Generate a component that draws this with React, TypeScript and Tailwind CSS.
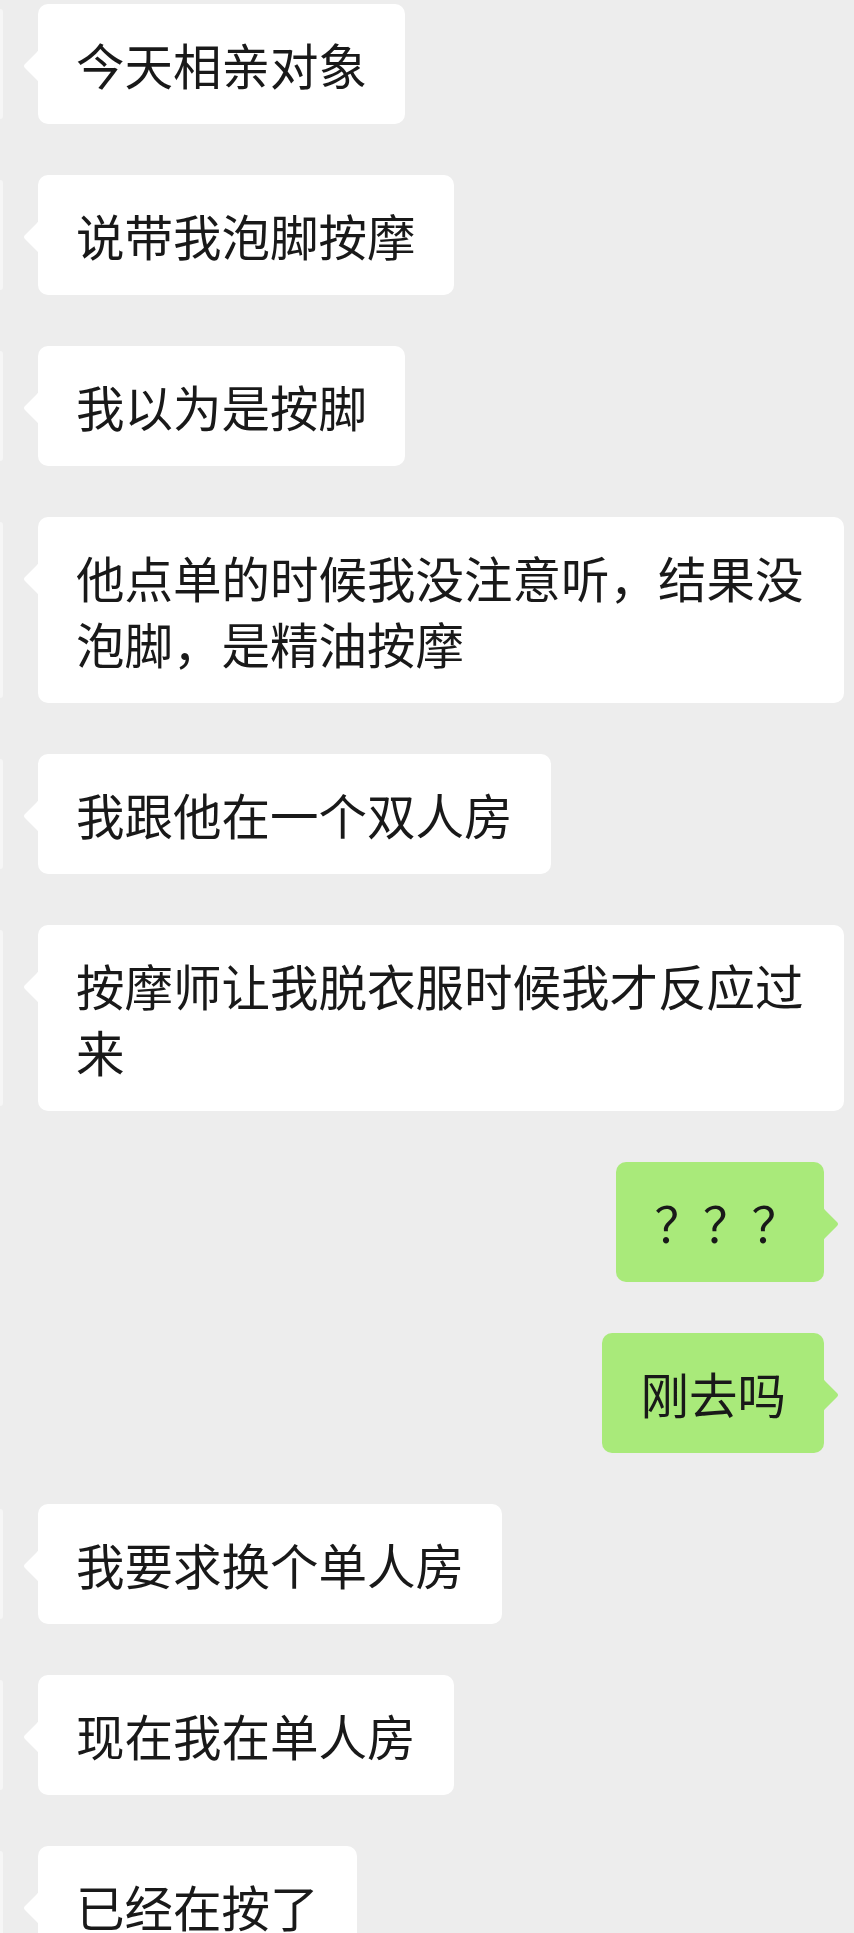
import React from 'react';

type Msg = { from: 'them' | 'me'; text: string; narrow?: boolean };

const messages: Msg[] = [
  { from: 'them', text: '今天相亲对象' },
  { from: 'them', text: '说带我泡脚按摩' },
  { from: 'them', text: '我以为是按脚' },
  { from: 'them', text: '他点单的时候我没注意听，结果没泡脚，是精油按摩' },
  { from: 'them', text: '我跟他在一个双人房' },
  { from: 'them', text: '按摩师让我脱衣服时候我才反应过来' },
  { from: 'me', text: '？？？', narrow: true },
  { from: 'me', text: '刚去吗' },
  { from: 'them', text: '我要求换个单人房' },
  { from: 'them', text: '现在我在单人房' },
  { from: 'them', text: '已经在按了' },
];

// little pointer on the side of a bubble
function Tail({ side, color }: { side: 'left' | 'right'; color: string }) {
  const pos = side === 'left' ? 'left-[-15px]' : 'right-[-15px] -scale-x-100';
  return (
    <svg
      className={`absolute top-[42px] ${pos}`}
      width="16"
      height="40"
      viewBox="0 0 16 40"
    >
      <path
        d="M16 0 C16 3 15.5 4.5 14 6 L2 18 Q0 20 2 22 L14 34 C15.5 35.5 16 37 16 40 Z"
        fill={color}
      />
    </svg>
  );
}

function Bubble({ msg }: { msg: Msg }) {
  const mine = msg.from === 'me';
  const color = mine ? '#a9ea7a' : '#ffffff';

  if (mine) {
    return (
      <div className="flex justify-end pr-[30px]">
        <div
          className={`relative rounded-[10px] bg-[#a9ea7a] py-[27px] pl-[38px] ${
            msg.narrow ? 'pr-[24px]' : 'pr-[38px]'
          } text-[48.5px] leading-[66px] text-[#191919]`}
        >
          {msg.text}
          <Tail side="right" color={color} />
        </div>
      </div>
    );
  }

  return (
    <div className="flex items-stretch">
      <div className="my-[5px] w-[3px] rounded-r-[3px] bg-[#f6f6f6]" />
      <div className="ml-[35px] max-w-[806px] relative rounded-[10px] bg-white px-[38px] py-[27px] text-[48.5px] leading-[66px] text-[#191919]">
        {msg.text}
        <Tail side="left" color={color} />
      </div>
    </div>
  );
}

export default function App() {
  return (
    <div
      className="w-[854px] h-[1933px] overflow-hidden bg-[#ededed]"
      style={{ fontFamily: '"Noto Sans CJK SC", "Noto Sans", sans-serif' }}
    >
      <div className="flex flex-col gap-[51px] pt-[4px]">
        {messages.map((m, i) => (
          <Bubble key={i} msg={m} />
        ))}
      </div>
    </div>
  );
}
